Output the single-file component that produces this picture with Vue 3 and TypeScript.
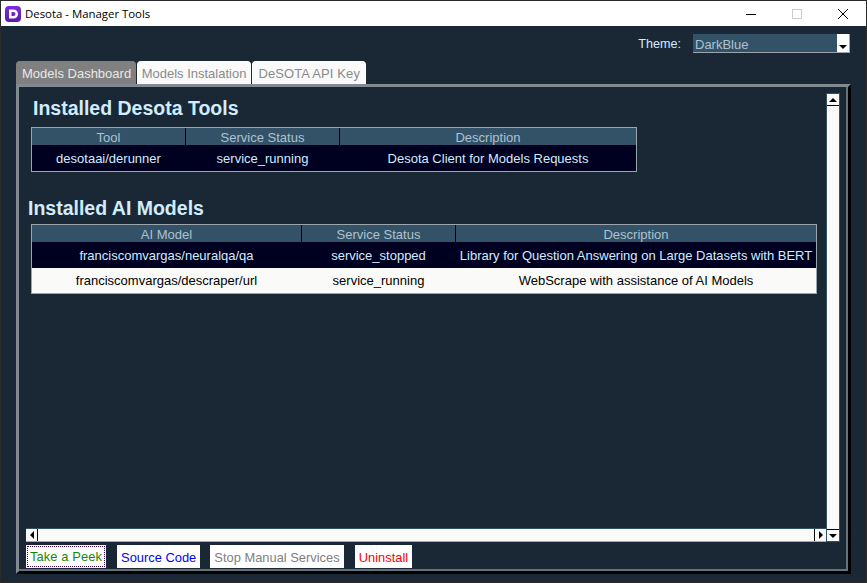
<script setup lang="ts">
import { ref } from 'vue'

interface Row { name: string; status: string; description: string; light?: boolean }

const tabs = ['Models Dashboard', 'Models Instalation', 'DeSOTA API Key']
const activeTab = ref(0)

const tools: Row[] = [
  { name: 'desotaai/derunner', status: 'service_running', description: 'Desota Client for Models Requests' },
]
const models: Row[] = [
  { name: 'franciscomvargas/neuralqa/qa', status: 'service_stopped', description: 'Library for Question Answering on Large Datasets with BERT' },
  { name: 'franciscomvargas/descraper/url', status: 'service_running', description: 'WebScrape with assistance of AI Models', light: true },
]
</script>

<template>
  <div class="window">
    <header class="titlebar">
      <svg class="logo" width="16" height="16" viewBox="0 0 16 16">
        <defs>
          <linearGradient id="logo-bg" x1="0" y1="0" x2="0" y2="1">
            <stop offset="0" stop-color="#7a2ee0" />
            <stop offset="1" stop-color="#5a18b0" />
          </linearGradient>
        </defs>
        <rect width="16" height="16" rx="4" fill="url(#logo-bg)" />
        <path d="M4 3.5h4.5a4.5 4.5 0 0 1 0 9H4z M6.5 6v4h2a2 2 0 0 0 0-4z" fill="#fff" fill-rule="evenodd" />
      </svg>
      <span class="title">Desota - Manager Tools</span>
      <div class="controls">
        <svg width="46" height="25" viewBox="0 0 46 25"><path d="M18 13.5h10" stroke="#000" /></svg>
        <svg width="46" height="25" viewBox="0 0 46 25"><rect x="18.5" y="8.5" width="9" height="9" fill="none" stroke="#ccc" /></svg>
        <svg width="46" height="25" viewBox="0 0 46 25"><path d="M18 8l10 10M28 8l-10 10" stroke="#000" /></svg>
      </div>
    </header>

    <main class="body">
      <div class="theme-row">
        <label class="theme-label">Theme:</label>
        <div class="combo">
          <span class="combo-value">DarkBlue</span>
          <span class="combo-btn"><i class="tri down"></i></span>
        </div>
      </div>

      <nav class="tabs">
        <button
          v-for="(t, i) in tabs"
          :key="t"
          class="tab"
          :class="{ active: i === activeTab }"
          @click="activeTab = i"
        >{{ t }}</button>
      </nav>

      <section class="panel">
        <div class="viewport">
          <div class="scroll-content">
            <h2 class="heading tools-heading">Installed Desota Tools</h2>
            <div class="table tools-table">
              <div class="row head">
                <span>Tool</span><span>Service Status</span><span>Description</span>
              </div>
              <div v-for="r in tools" :key="r.name" class="row cells">
                <span>{{ r.name }}</span><span>{{ r.status }}</span><span>{{ r.description }}</span>
              </div>
            </div>

            <h2 class="heading models-heading">Installed AI Models</h2>
            <div class="table models-table">
              <div class="row head">
                <span>AI Model</span><span>Service Status</span><span>Description</span>
              </div>
              <div v-for="r in models" :key="r.name" class="row cells" :class="{ light: r.light }">
                <span>{{ r.name }}</span><span>{{ r.status }}</span><span>{{ r.description }}</span>
              </div>
            </div>
          </div>

          <div class="vscroll">
            <span class="arrow"><i class="tri up"></i></span>
            <span class="track"></span>
            <span class="arrow"><i class="tri down"></i></span>
          </div>
          <div class="hscroll">
            <span class="arrow"><i class="tri left"></i></span>
            <span class="track"></span>
            <span class="arrow"><i class="tri right"></i></span>
          </div>
        </div>

        <div class="actions">
          <button class="action peek"><span>Take a Peek</span></button>
          <button class="action source">Source Code</button>
          <button class="action stop">Stop Manual Services</button>
          <button class="action uninstall">Uninstall</button>
        </div>
      </section>
    </main>
  </div>
</template>

<style scoped>
.window {
  width: 867px;
  height: 583px;
  box-sizing: border-box;
  border: 1px solid #2b2b2b;
  display: flex;
  flex-direction: column;
  font-family: "Liberation Sans", Arial, sans-serif;
  font-size: 13px;
  overflow: hidden;
}
.titlebar {
  height: 25px;
  flex: none;
  background: #fff;
  display: flex;
  align-items: center;
  padding-left: 4px;
  color: #000;
}
.logo { flex: none; }
.title { margin-left: 4px; font-family: "Open Sans", sans-serif; font-size: 11.4px; }
.controls { margin-left: auto; display: flex; }
.body {
  flex: 1;
  background: #1a2835;
  display: flex;
  flex-direction: column;
  padding: 8px 15px 8px 15px;
  min-height: 0;
}
.theme-row {
  display: flex;
  justify-content: flex-end;
  align-items: center;
  height: 19px;
  padding-right: 1px;
}
.theme-label { color: #d1ecff; margin-right: 12px; padding-top: 1px; font-size: 12.6px; }
.combo {
  width: 157px;
  height: 19px;
  box-sizing: border-box;
  background: #335267;
  border-bottom: 1px solid #9aa5ad;
  display: flex;
  align-items: center;
  justify-content: space-between;
  color: #acc2d0;
  padding-left: 2px;
}
.combo-value { padding-top: 2px; }
.combo-btn {
  width: 13px;
  height: 18px;
  background: #fff;
  border-right: 1px solid #9aa5ad;
  display: flex;
  align-items: flex-end;
  justify-content: center;
  padding-bottom: 3px;
  box-sizing: border-box;
  align-self: flex-start;
}
.tabs {
  display: flex;
  gap: 1px;
  margin-top: 8px;
  height: 23px;
  flex: none;
}
.tab {
  height: 23px;
  padding: 0 4px;
  margin: 0;
  border: 1px solid #fff;
  border-bottom: none;
  border-radius: 4px 4px 0 0;
  background: #fafafa;
  color: #8a8a8a;
  font-family: inherit;
  font-size: 13px;
}
.tab:first-child { padding: 0 3.5px 0 5px; }
.tab:last-child { padding: 0 5px; letter-spacing: 0.1px; }
.tab.active { background: #808080; color: #e8e8e8; border-color: #808080; }
.panel {
  flex: 1;
  min-height: 0;
  border: 3px solid #808a90;
  border-right-color: #000;
  border-bottom-color: #000;
  box-shadow: inset -2px -2px 0 #67737a;
  display: flex;
  flex-direction: column;
  padding: 6px 6px 3px 7px;
  box-sizing: border-box;
}
.viewport {
  display: grid;
  grid-template-columns: 800px 14px;
  grid-template-rows: 435px 14px;
}
.scroll-content { overflow: hidden; }
.heading { margin: 0; font-size: 19.5px; font-weight: bold; color: #d1ecff; line-height: 22px; }
.tools-heading { margin: 4px 0 0 7px; }
.models-heading { margin: 25px 0 0 2px; }
.table {
  background: #1a2835;
  border: 1px solid #9aa5ad;
  margin-left: 5px;
  margin-top: 5px;
  box-sizing: border-box;
}
.tools-heading + .table { margin-top: 8px; }
.tools-table { width: 606px; --c1: 153px; --c2: 153px; --c3: 296px; }
.models-table { width: 786px; --c1: 269px; --c2: 153px; --c3: 360px; }
.row {
  display: grid;
  grid-template-columns: var(--c1) var(--c2) var(--c3);
  column-gap: 1px;
}
.row > span { text-align: center; white-space: nowrap; overflow: hidden; }
.head { height: 17px; background: #000; }
.head > span { height: 17px; line-height: 19px; background: #335267; color: #acc2d0; }
.cells { height: 26px; background: #000020; color: #d1ecff; }
.cells > span { height: 26px; line-height: 28px; }
.cells.light { height: 25px; background: #fafaf8; color: #000; }
.cells.light > span { height: 25px; line-height: 26px; }
.vscroll, .hscroll { display: flex; background: #fafaf8; box-sizing: border-box; }
.vscroll { flex-direction: column; grid-row: 1 / 3; grid-column: 2; border: 1px solid #335267; }
.hscroll { grid-row: 2; grid-column: 1; border-top: 1px solid #335267; border-bottom: 1px solid #8fb0c4; }
.track { flex: 1; }
.arrow {
  width: 12px;
  height: 12px;
  flex: none;
  display: flex;
  align-items: center;
  justify-content: center;
  background: #fafaf8;
  box-sizing: border-box;
}
.vscroll .arrow:first-child { border-bottom: 1px solid #000; }
.vscroll .arrow:last-child { border-top: 1px solid #000; }
.hscroll .arrow:first-child { border-right: 1px solid #000; }
.hscroll .arrow:last-child { border-left: 1px solid #000; }
.tri { display: block; width: 0; height: 0; border: 4px solid transparent; }
.tri.up { border-bottom-color: #000; border-top-width: 0; }
.tri.down { border-top-color: #000; border-bottom-width: 0; }
.tri.left { border-right-color: #000; border-left-width: 0; }
.tri.right { border-left-color: #000; border-right-width: 0; }
.actions { display: flex; gap: 11px; margin-top: 3px; height: 23px; }
.action {
  height: 23px;
  padding: 1px 4px 0;
  margin: 0;
  border: none;
  background: #fff;
  font-family: inherit;
  font-size: 12.9px;
  box-sizing: border-box;
}
.peek { color: #0f8a0f; padding: 1px; }
.peek span { display: block; line-height: 20px; height: 19px; border: 1px dotted #400060; padding: 0 2px; letter-spacing: 0.1px; white-space: nowrap; }
.source { color: #0000ff; margin-right: -1px; }
.stop { color: #808080; }
.uninstall { color: #ff0000; }
</style>

<style>
html, body { margin: 0; background: #1a2835; }
</style>
